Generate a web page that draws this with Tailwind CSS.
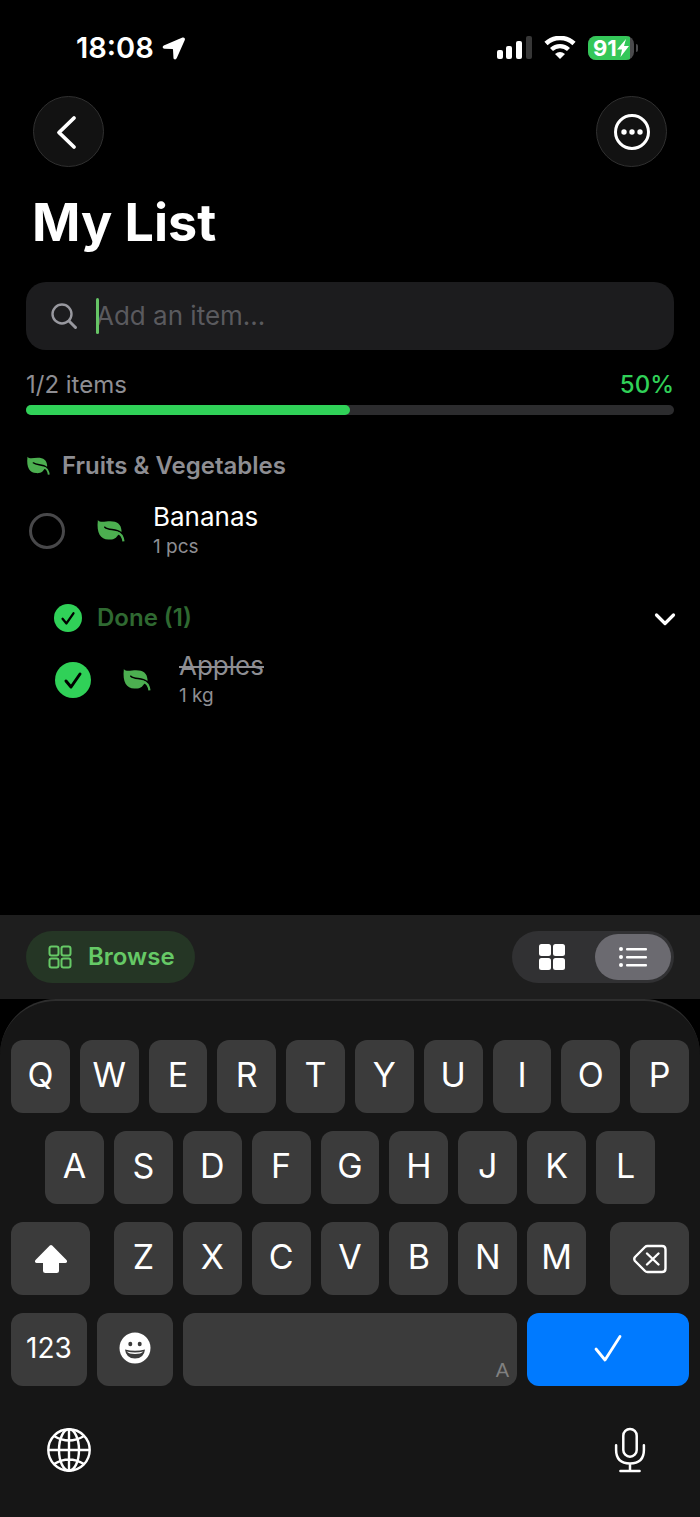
<!DOCTYPE html>
<html lang="en">
<head>
    <meta charset="UTF-8">
    <meta name="viewport" content="width=device-width, initial-scale=1.0">
    <script src="https://cdn.jsdelivr.net/npm/@tailwindcss/browser@4"></script>
    <title>My List</title>
</head>
<body class="bg-black text-white font-['Inter',sans-serif]">

<svg class="hidden">
    <symbol id="leaf" viewBox="0 0 90 76">
        <path d="M5 3C12 13 28 7 44 7C66 7 79 16 80 38L78 46C70 46 70 52 62 59C56 64 47 66 38 65C14 64 0 46 5 3Z" fill="#4caf50"/>
        <path d="M27 26C40 38 62 28 79 44" fill="none" stroke="#000" stroke-width="5" stroke-linecap="round"/>
        <path d="M66 43C79 46 84 56 86 71" fill="none" stroke="#4caf50" stroke-width="7"/>
    </symbol>
    <symbol id="check-circle" viewBox="0 0 36 36">
        <circle cx="18" cy="18" r="18" fill="#30d158"/>
        <path d="M11 19L16 25L25 12" fill="none" stroke="#000" stroke-width="3" stroke-linecap="round" stroke-linejoin="round"/>
    </symbol>
</svg>

<div class="min-h-screen flex flex-col">

    <!-- Status bar -->
    <div class="h-24 flex items-center justify-between pl-[76px] pr-[62px]">
        <div class="flex items-center gap-2">
            <span class="text-[29px] font-semibold">18:08</span>
            <svg class="w-6 h-6" viewBox="0 0 24 24"><path d="M1.800 9.500L20.500 1.500Q23.500 1 22.800 4L14.800 22Q13.500 24.500 11.500 22.500L11 13.500Q11 13 10.500 13L2.500 12.800Q-0.800 11.500 1.800 9.500Z" fill="#fff"/></svg>
        </div>
        <div class="flex items-center gap-3">
            <svg class="w-9 h-6" viewBox="0 0 36 24">
                <rect x="1" y="14" width="6" height="9" rx="2" fill="#fff"/>
                <rect x="10" y="10" width="6" height="13" rx="2" fill="#fff"/>
                <rect x="20" y="5" width="6" height="18" rx="2" fill="#fff"/>
                <rect x="30" y="0" width="6" height="23" rx="2" fill="#373737"/>
            </svg>
            <svg class="w-8 h-6" viewBox="0 0 32 24">
                <path d="M2 7.500A20.500 20.500 0 0 1 30 7.500" fill="none" stroke="#fff" stroke-width="4.600"/>
                <path d="M7.500 13.500A12.500 12.500 0 0 1 24.500 13.500" fill="none" stroke="#fff" stroke-width="4.400"/>
                <path d="M16 23L11 18Q16 14 21 18Z" fill="#fff"/>
            </svg>
            <div class="flex items-center gap-[2px]">
                <div class="w-[46px] h-6 rounded-lg overflow-hidden flex bg-[#4a4a4c]">
                    <div class="w-[42px] bg-[#34c759] flex items-center pl-[5px]">
                        <span class="text-[22px] leading-6 font-bold">91</span>
                        <svg class="w-3 h-[18px] shrink-0" viewBox="0 0 12 18"><path d="M9 0L0 10.500H5L3.500 18L12 7H7Z" fill="#fff"/></svg>
                    </div>
                </div>
                <div class="w-[2px] h-2 rounded-r bg-[#4a4a4c]"></div>
            </div>
        </div>
    </div>

    <!-- Nav buttons -->
    <div class="flex justify-between px-[33px]">
        <button aria-label="Back" class="size-[71px] rounded-full bg-[#121212] border border-[#303030] flex items-center justify-center">
            <svg class="size-9" viewBox="0 0 36 36"><path d="M23 4L8 18.500L23 33" fill="none" stroke="#fff" stroke-width="3.800" stroke-linecap="round" stroke-linejoin="round"/></svg>
        </button>
        <button aria-label="More" class="size-[71px] rounded-full bg-[#121212] border border-[#303030] flex items-center justify-center">
            <svg class="size-9" viewBox="0 0 36 36">
                <circle cx="18" cy="18" r="16.500" fill="none" stroke="#fff" stroke-width="3"/>
                <circle cx="10" cy="18" r="2.700" fill="#fff"/><circle cx="18" cy="18" r="2.700" fill="#fff"/><circle cx="26" cy="18" r="2.700" fill="#fff"/>
            </svg>
        </button>
    </div>

    <h1 class="mt-6 px-8 text-[52px] leading-[64px] font-bold">My List</h1>

    <main class="px-[26px] pb-6">
        <div class="mt-[27px] h-[68px] rounded-[20px] bg-[#1c1c1e] flex items-center pl-6 pr-6 gap-[18px]">
            <svg class="size-7 shrink-0" viewBox="0 0 28 28"><circle cx="12" cy="12" r="9.500" fill="none" stroke="#98989f" stroke-width="2.400"/><path d="M19 19L25.500 25.500" stroke="#98989f" stroke-width="3" stroke-linecap="round"/></svg>
            <div class="relative flex-1">
                <input type="text" aria-label="Add an item" placeholder="Add an item..." class="block w-full bg-transparent outline-none text-[26px] leading-9 placeholder:text-[#5a5a5e]">
                <div class="absolute left-0 top-0 w-[3px] h-9 rounded-full bg-[#66c466]"></div>
            </div>
        </div>

        <div class="mt-5 flex justify-between text-2xl leading-[30px]">
            <span class="text-[#8e8e93]">1/2 items</span>
            <span class="text-[#30d158] font-medium">50%</span>
        </div>
        <div role="progressbar" aria-label="Items done" aria-valuenow="50" class="mt-[5px] h-2.5 rounded-full bg-[#2c2c2e]">
            <div class="h-full rounded-full bg-[#30d158]" style="width: 50%"></div>
        </div>

        <h2 class="mt-9 flex items-center gap-3 text-2xl leading-[30px] font-semibold text-[#8e8e93]">
            <svg class="w-6 h-5"><use href="#leaf"/></svg>
            Fruits &amp; Vegetables
        </h2>

        <div class="mt-5 flex items-center pl-[3px]">
            <input type="checkbox" id="bananas" class="appearance-none size-9 rounded-full border-3 border-[#48484a]">
            <svg class="ml-[31px] w-[29px] h-6"><use href="#leaf"/></svg>
            <label for="bananas" class="ml-7 flex flex-col">
                <span class="text-[26px] leading-8">Bananas</span>
                <span class="text-[19px] leading-7 text-[#8e8e93]">1 pcs</span>
            </label>
        </div>

        <button aria-expanded="true" class="mt-[41px] w-full flex items-center pl-7 text-left">
            <svg class="size-7"><use href="#check-circle"/></svg>
            <span class="ml-[15px] flex-1 text-2xl leading-8 font-semibold text-[#2f6931]">Done (1)</span>
            <svg class="w-[22px] h-4 -mr-[2px]" viewBox="0 0 22 16"><path d="M2.500 5L11 13.500L19.500 5" fill="none" stroke="#fff" stroke-width="3.200" stroke-linecap="round" stroke-linejoin="round"/></svg>
        </button>

        <div class="mt-4 flex items-center pl-[29px]">
            <div class="relative size-9">
                <input type="checkbox" id="apples" checked class="appearance-none block size-9 rounded-full">
                <svg class="absolute inset-0 size-9 pointer-events-none"><use href="#check-circle"/></svg>
            </div>
            <svg class="ml-[31px] w-[29px] h-6"><use href="#leaf"/></svg>
            <label for="apples" class="ml-7 flex flex-col text-[#8e8e93]">
                <span class="text-[26px] leading-8 line-through decoration-2">Apples</span>
                <span class="text-[19px] leading-7">1 kg</span>
            </label>
        </div>
    </main>

    <!-- Toolbar -->
    <div class="mt-auto h-[84px] bg-[#1e1e1e] flex items-center justify-between px-[26px]">
        <button class="h-[52px] rounded-full bg-[#253625] text-[#66c966] flex items-center gap-4 pl-[22px] pr-5 text-2xl font-semibold">
            <svg class="size-6" viewBox="0 0 24 24" fill="none" stroke="currentColor" stroke-width="2">
                <rect x="1.500" y="1.500" width="9" height="9" rx="2"/><rect x="13.500" y="1.500" width="9" height="9" rx="2"/>
                <rect x="1.500" y="13.500" width="9" height="9" rx="2"/><rect x="13.500" y="13.500" width="9" height="9" rx="2"/>
            </svg>
            Browse
        </button>
        <div class="h-[52px] rounded-full bg-[#313133] flex items-center p-[3px]">
            <button aria-label="Grid view" class="w-20 h-full flex items-center justify-center pr-1.5">
                <svg class="size-[26px]" viewBox="0 0 26 26" fill="#fff">
                    <rect x="0" y="0" width="12" height="12" rx="2.500"/><rect x="14" y="0" width="12" height="12" rx="2.500"/>
                    <rect x="0" y="14" width="12" height="12" rx="2.500"/><rect x="14" y="14" width="12" height="12" rx="2.500"/>
                </svg>
            </button>
            <button aria-label="List view" aria-pressed="true" class="w-[76px] h-full rounded-full bg-[#6b6a70] flex items-center justify-center">
                <svg class="w-7 h-6" viewBox="0 0 28 24" fill="#fff">
                    <circle cx="2" cy="4" r="2"/><circle cx="2" cy="12" r="2"/><circle cx="2" cy="20" r="2"/>
                    <rect x="7" y="3" width="21" height="2.400" rx="1"/><rect x="7" y="11" width="21" height="2.400" rx="1"/><rect x="7" y="19" width="21" height="2.400" rx="1"/>
                </svg>
            </button>
        </div>
    </div>

    <!-- Keyboard -->
    <div class="rounded-t-[56px] border-t-2 border-[#2e2e2e] bg-[#161616] px-[11px] pt-[39px] pb-[43px] flex flex-col gap-[18px] text-[34px]">
        <div class="flex gap-2.5">
            <button class="flex-1 h-[73px] rounded-xl bg-[#3b3b3b] pb-1">Q</button>
            <button class="flex-1 h-[73px] rounded-xl bg-[#3b3b3b] pb-1">W</button>
            <button class="flex-1 h-[73px] rounded-xl bg-[#3b3b3b] pb-1">E</button>
            <button class="flex-1 h-[73px] rounded-xl bg-[#3b3b3b] pb-1">R</button>
            <button class="flex-1 h-[73px] rounded-xl bg-[#3b3b3b] pb-1">T</button>
            <button class="flex-1 h-[73px] rounded-xl bg-[#3b3b3b] pb-1">Y</button>
            <button class="flex-1 h-[73px] rounded-xl bg-[#3b3b3b] pb-1">U</button>
            <button class="flex-1 h-[73px] rounded-xl bg-[#3b3b3b] pb-1">I</button>
            <button class="flex-1 h-[73px] rounded-xl bg-[#3b3b3b] pb-1">O</button>
            <button class="flex-1 h-[73px] rounded-xl bg-[#3b3b3b] pb-1">P</button>
        </div>
        <div class="flex gap-2.5 px-[34px]">
            <button class="flex-1 h-[73px] rounded-xl bg-[#3b3b3b] pb-1">A</button>
            <button class="flex-1 h-[73px] rounded-xl bg-[#3b3b3b] pb-1">S</button>
            <button class="flex-1 h-[73px] rounded-xl bg-[#3b3b3b] pb-1">D</button>
            <button class="flex-1 h-[73px] rounded-xl bg-[#3b3b3b] pb-1">F</button>
            <button class="flex-1 h-[73px] rounded-xl bg-[#3b3b3b] pb-1">G</button>
            <button class="flex-1 h-[73px] rounded-xl bg-[#3b3b3b] pb-1">H</button>
            <button class="flex-1 h-[73px] rounded-xl bg-[#3b3b3b] pb-1">J</button>
            <button class="flex-1 h-[73px] rounded-xl bg-[#3b3b3b] pb-1">K</button>
            <button class="flex-1 h-[73px] rounded-xl bg-[#3b3b3b] pb-1">L</button>
        </div>
        <div class="flex gap-6">
            <button aria-label="Shift" class="w-[79px] h-[73px] rounded-xl bg-[#3b3b3b] flex items-center justify-center">
                <svg class="w-[34px] h-[30px]" viewBox="0 0 34 30"><path d="M15.800 1.500Q17 0.500 18.200 1.500L32.500 16Q34 18.500 31.500 19H25V26.500Q25 29 22.500 29H11.500Q9 29 9 26.500V19H2.500Q0 18.500 1.500 16Z" fill="#fff"/></svg>
            </button>
            <div class="flex-1 flex gap-2.5">
                <button class="flex-1 h-[73px] rounded-xl bg-[#3b3b3b] pb-1">Z</button>
                <button class="flex-1 h-[73px] rounded-xl bg-[#3b3b3b] pb-1">X</button>
                <button class="flex-1 h-[73px] rounded-xl bg-[#3b3b3b] pb-1">C</button>
                <button class="flex-1 h-[73px] rounded-xl bg-[#3b3b3b] pb-1">V</button>
                <button class="flex-1 h-[73px] rounded-xl bg-[#3b3b3b] pb-1">B</button>
                <button class="flex-1 h-[73px] rounded-xl bg-[#3b3b3b] pb-1">N</button>
                <button class="flex-1 h-[73px] rounded-xl bg-[#3b3b3b] pb-1">M</button>
            </div>
            <button aria-label="Delete" class="w-[79px] h-[73px] rounded-xl bg-[#3b3b3b] flex items-center justify-center">
                <svg class="w-[34px] h-[30px]" viewBox="0 0 34 30" fill="none" stroke="#fff" stroke-width="2.400" stroke-linecap="round" stroke-linejoin="round"><path d="M14.500 2H29Q32.500 2 32.500 5.500V24.500Q32.500 28 29 28H14.500Q13 28 12 27L2 17Q0.500 15 2 13L12 3Q13 2 14.500 2Z"/><path d="M14 9.500L25.500 20.500M25.500 9.500L14 20.500"/></svg>
            </button>
        </div>
        <div class="flex gap-2.5">
            <button class="w-[76px] h-[73px] rounded-xl bg-[#3b3b3b] pb-1 text-[28px]">123</button>
            <button aria-label="Emoji" class="w-[76px] h-[73px] rounded-xl bg-[#3b3b3b] flex items-center justify-center pb-1">
                <svg class="size-8" viewBox="0 0 32 32">
                    <circle cx="16" cy="16" r="15.500" fill="#fff"/>
                    <ellipse cx="11.300" cy="12" rx="2" ry="2.300" fill="#3b3b3b"/><ellipse cx="20.700" cy="12" rx="2" ry="2.300" fill="#3b3b3b"/>
                    <path d="M6 17.500Q16 20 26 17.500Q25 26.500 16 26.500Q7 26.500 6 17.500Z" fill="#3b3b3b"/>
                    <path d="M7.500 19.500Q16 21.500 24.500 19.500Q22 22 16 22Q10 22 7.500 19.500Z" fill="#fff"/>
                </svg>
            </button>
            <button aria-label="Space" class="flex-1 h-[73px] rounded-xl bg-[#3b3b3b] flex items-end justify-end pr-2 pb-1 text-xl leading-6 text-[#808080] font-['Liberation_Sans_Narrow','Liberation_Sans',sans-serif]">A</button>
            <button aria-label="Done" class="w-[162px] h-[73px] rounded-xl bg-[#007aff] flex items-center justify-center pb-1">
                <svg class="w-7 h-[28px]" viewBox="0 0 28 28"><path d="M2 15L11 26L26 2.500" fill="none" stroke="#fff" stroke-width="2.800" stroke-linecap="round" stroke-linejoin="round"/></svg>
            </button>
        </div>
        <div class="mt-[22px] flex items-center justify-between px-9">
            <button aria-label="Next keyboard">
                <svg class="block size-11" viewBox="0 0 44 44" fill="none" stroke="#fff" stroke-width="2.400">
                    <circle cx="22" cy="22" r="20.700"/><ellipse cx="22" cy="22" rx="10" ry="20.700"/>
                    <path d="M22 1V43M1 22H43M7 8Q22 17 37 8M7 36Q22 27 37 36"/>
                </svg>
            </button>
            <button aria-label="Dictate">
                <svg class="block w-[46px] h-12" viewBox="0 0 48 48" fill="none" stroke="#fff" stroke-width="2.600" stroke-linecap="round">
                    <rect x="17" y="2" width="14" height="29" rx="7"/>
                    <path d="M9.500 19V24Q9.500 38 24 38Q38.500 38 38.500 24V19M24 38V46M14 46H34"/>
                </svg>
            </button>
        </div>
    </div>
</div>

</body>
</html>
